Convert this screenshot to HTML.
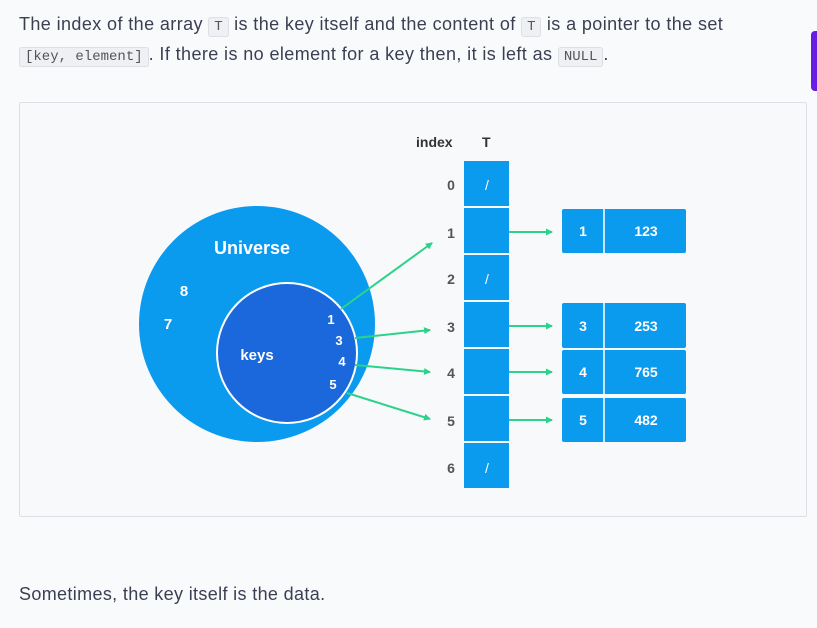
<!DOCTYPE html>
<html><head><meta charset="utf-8"><style>
body{margin:0;width:817px;height:628px;background:#f9fafc;font-family:"Liberation Sans",sans-serif;color:#3b3f52;position:relative;overflow:hidden}
p{position:absolute;left:19px;margin:0;font-size:18px;letter-spacing:0.4px;white-space:nowrap}
code{font-family:"Liberation Mono",monospace;font-size:14px;letter-spacing:0;background:#eef0f3;border:1px solid #dcdfe4;border-radius:3px;padding:1px 5px;color:#555}
.fig{position:absolute;left:19px;top:102px;width:786px;height:413px;border:1px solid #dde1e7;background:#f8f9fb;border-radius:2px}
.pur{position:absolute;left:811px;top:31px;width:8px;height:60px;background:#6a1ee0;border-radius:4px 0 0 4px}
</style></head><body>
<p style="top:14px">The index of the array <code>T</code> is the key itself and the content of <code>T</code> is a pointer to the set</p>
<p style="top:44px"><code>[key, element]</code>. If there is no element for a key then, it is left as <code>NULL</code>.</p>
<div class="pur"></div>
<div class="fig"></div>
<svg width="817" height="628" style="position:absolute;left:0;top:0" font-family="Liberation Sans,sans-serif" font-weight="bold">
<defs><marker id="a" markerWidth="8" markerHeight="8" refX="6" refY="4" orient="auto" markerUnits="userSpaceOnUse"><path d="M0,0.5 L7,4 L0,7.5z" fill="#2bd38a"/></marker></defs>
<circle cx="257" cy="324" r="118" fill="#0a9bef"/>
<circle cx="287" cy="353" r="70" fill="#1b67dc" stroke="#fff" stroke-width="2"/>
<g fill="#fff" font-size="18"><text x="214" y="254">Universe</text></g>
<g fill="#fff" font-size="15" text-anchor="middle"><text x="184" y="296">8</text><text x="168" y="329">7</text><text x="257" y="360">keys</text>
<text x="331" y="324" font-size="13">1</text><text x="339" y="345" font-size="13">3</text><text x="342" y="366" font-size="13">4</text><text x="333" y="389" font-size="13">5</text></g>
<g stroke="#2bd38a" stroke-width="2" marker-end="url(#a)" fill="none">
<path d="M341,309 L432,243"/><path d="M355,338 L430,330"/><path d="M355,365 L430,372"/><path d="M347,393 L430,419"/>
<path d="M486,232 L552,232"/><path d="M486,326 L552,326"/><path d="M486,372 L552,372"/><path d="M486,420 L552,420"/>
</g>
<text x="416" y="147" font-size="14" fill="#333">index</text><text x="482" y="147" font-size="14" fill="#333">T</text>
<g fill="#0a9bef">
<rect x="464" y="161" width="45" height="45"/><rect x="464" y="208" width="45" height="45"/><rect x="464" y="255" width="45" height="45"/><rect x="464" y="302" width="45" height="45"/><rect x="464" y="349" width="45" height="45"/><rect x="464" y="396" width="45" height="45"/><rect x="464" y="443" width="45" height="45"/>
<rect x="562" y="209" width="124" height="44" rx="2"/><rect x="562" y="303" width="124" height="45" rx="2"/><rect x="562" y="350" width="124" height="44" rx="2"/><rect x="562" y="398" width="124" height="44" rx="2"/>
</g>
<g stroke="#fff" stroke-width="1.5"><path d="M604,209V253M604,303V348M604,350V394M604,398V442"/></g>
<g fill="#555" font-size="14" text-anchor="middle"><text x="451" y="190">0</text><text x="451" y="238">1</text><text x="451" y="284">2</text><text x="451" y="332">3</text><text x="451" y="378">4</text><text x="451" y="426">5</text><text x="451" y="473">6</text></g>
<g fill="#fff" font-size="14" text-anchor="middle" font-weight="normal"><text x="487" y="190">/</text><text x="487" y="284">/</text><text x="487" y="473">/</text></g>
<g fill="#fff" font-size="14" text-anchor="middle"><text x="583" y="236">1</text><text x="646" y="236">123</text><text x="583" y="331">3</text><text x="646" y="331">253</text><text x="583" y="377">4</text><text x="646" y="377">765</text><text x="583" y="425">5</text><text x="646" y="425">482</text></g>
</svg>
<p style="top:584px;letter-spacing:0.35px">Sometimes, the key itself is the data.</p>
</body></html>
